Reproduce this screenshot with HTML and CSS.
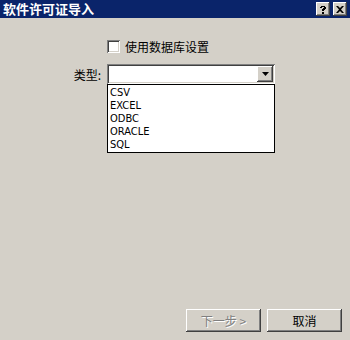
FILE: index.html
```html
<!DOCTYPE html>
<html lang="zh-CN">
<head>
    <meta charset="UTF-8">
    <title>软件许可证导入</title>
    <link rel="stylesheet" href="styles.css">
</head>
<body>
    <div class="window">
        <div class="titlebar">
            <span class="title">软件许可证导入</span>
            <div class="title-buttons">
                <span class="tbtn">
                    <svg width="8" height="9" viewBox="0 0 8 9"><path d="M1 2h1V1h4v1h1v2H6v1H5v1H3V4h1V3h1V2H3v1H1z" fill="#000"/><rect x="3" y="7" width="2" height="2" fill="#000"/></svg>
                </span>
                <span class="tbtn">
                    <svg width="8" height="7" viewBox="0 0 8 7"><path d="M0 0h2l2 2 2-2h2L5 3.5 8 7H6L4 5 2 7H0l3-3.5z" fill="#000"/></svg>
                </span>
            </div>
        </div>

        <div class="content">
            <label class="check-row">
                <span class="checkbox"></span>
                <span>使用数据库设置</span>
            </label>

            <div class="form-row">
                <span class="form-label">类型:</span>
                <div class="combo">
                    <div class="combo-field"></div>
                    <span class="combo-btn">
                        <svg width="7" height="4" viewBox="0 0 7 4"><path d="M0 0h7L3.5 4z" fill="#000"/></svg>
                    </span>
                    <!-- open dropdown list -->
                    <ul class="combo-list">
                        <li>CSV</li>
                        <li>EXCEL</li>
                        <li>ODBC</li>
                        <li>ORACLE</li>
                        <li>SQL</li>
                    </ul>
                </div>
            </div>
        </div>

        <div class="footer">
            <button class="btn" disabled>下一步 &gt;</button>
            <button class="btn">取消</button>
        </div>
    </div>
</body>
</html>
```

FILE: styles.css
```css
body {
    margin: 0;
    padding: 0;
    background-color: #d4d0c8;
    font-family: "Noto Sans CJK SC", "Liberation Sans", sans-serif;
    font-size: 12px;
    color: #000;
}
.window {
    width: 350px;
    height: 340px;
    display: flex;
    flex-direction: column;
    background-color: #d4d0c8;
}
.titlebar {
    height: 18px;
    background-color: #0a246a;
    display: flex;
    align-items: center;
    justify-content: space-between;
    padding: 0 3px 0 3px;
}
.title {
    color: #fff;
    font-weight: bold;
    font-size: 13px;
    line-height: 18px;
}
.title-buttons {
    display: flex;
    gap: 3px;
}
.tbtn {
    width: 14px;
    height: 14px;
    box-sizing: border-box;
    background-color: #d4d0c8;
    display: flex;
    align-items: center;
    justify-content: center;
    box-shadow: inset -1px -1px #404040, inset 1px 1px #fff, inset -2px -2px #808080;
}
.content {
    flex: 1;
    padding-top: 22px;
}
.check-row {
    display: flex;
    align-items: center;
    gap: 5px;
    margin-left: 107px;
    height: 13px;
    line-height: 13px;
}
.checkbox {
    width: 13px;
    height: 13px;
    box-sizing: border-box;
    background-color: #fff;
    box-shadow: inset 1px 1px #808080, inset -1px -1px #fff, inset 2px 2px #404040, inset -2px -2px #d4d0c8;
}
.form-row {
    display: flex;
    align-items: center;
    margin-top: 11px;
}
.form-label {
    width: 101px;
    text-align: right;
    padding-right: 6px;
    box-sizing: border-box;
    margin-right: 0;
    width: 107px;
}
.combo {
    position: relative;
    width: 168px;
    height: 20px;
    box-sizing: border-box;
    background-color: #fff;
    box-shadow: inset 1px 1px #808080, inset -1px -1px #fff, inset 2px 2px #404040, inset -2px -2px #d4d0c8;
    display: flex;
    justify-content: flex-end;
    padding: 2px;
}
.combo-field {
    flex: 1;
}
.combo-btn {
    width: 16px;
    height: 16px;
    box-sizing: border-box;
    background-color: #d4d0c8;
    display: flex;
    align-items: center;
    justify-content: center;
    box-shadow: inset -1px -1px #404040, inset 1px 1px #fff, inset -2px -2px #808080;
}
.combo-list {
    position: absolute;
    left: 0;
    top: 20px;
    width: 168px;
    box-sizing: border-box;
    margin: 0;
    padding: 1px 2px;
    list-style: none;
    background-color: #fff;
    border: 1px solid #000;
    font-family: "DejaVu Sans Condensed", "Liberation Sans", sans-serif;
    font-size: 11px;
}
.combo-list li {
    height: 13px;
    line-height: 13px;
}
.footer {
    display: flex;
    justify-content: flex-end;
    gap: 6px;
    padding: 0 8px 8px 0;
}
.btn {
    width: 75px;
    height: 23px;
    border: none;
    background-color: #d4d0c8;
    font-family: "Noto Sans CJK SC", sans-serif;
    font-size: 12px;
    color: #000;
    box-shadow: inset -1px -1px #404040, inset 1px 1px #fff, inset -2px -2px #808080;
    padding: 0;
}
.btn:disabled {
    color: #808080;
    text-shadow: 1px 1px #fff;
}
```
